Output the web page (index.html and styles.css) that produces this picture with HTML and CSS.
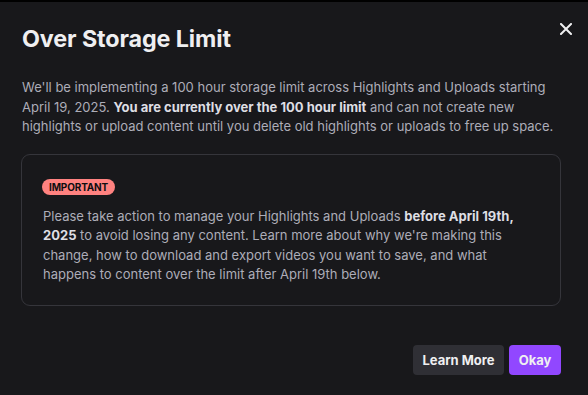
FILE: index.html
```html
<!DOCTYPE html>
<html>
<head>
<meta charset="utf-8">
<link rel="stylesheet" href="styles.css">
</head>
<body>
<div class="topbar"></div>
<div class="modal">
  <header class="head">
    <h1 class="title">Over Storage Limit</h1>
    <button class="close" aria-label="Close">
      <svg width="12" height="12" viewBox="0 0 12 12"><path d="M1 1 L11 11 M11 1 L1 11" stroke="#efeff1" stroke-width="2" stroke-linecap="square"/></svg>
    </button>
  </header>
  <p class="intro">We'll be implementing a 100 hour storage limit across Highlights and Uploads starting April 19, 2025. <strong>You are currently over the 100 hour limit</strong> and can not create new highlights or upload content until you delete old highlights or uploads to free up space.</p>
  <div class="notice">
    <span class="badge">IMPORTANT</span>
    <p class="notice-text">Please take action to manage your Highlights and Uploads <strong>before April 19th, 2025</strong> to avoid losing any content. Learn more about why we're making this change, how to download and export videos you want to save, and what happens to content over the limit after April 19th below.</p>
  </div>
  <footer class="actions">
    <button class="btn btn-secondary">Learn More</button>
    <button class="btn btn-primary">Okay</button>
  </footer>
</div>
</body>
</html>
```
FILE: styles.css
```css
html, body {
  margin: 0;
  padding: 0;
  background: #18181b;
  height: 100%;
}
body {
  font-family: Inter, "Noto Sans", sans-serif;
  color: #adadb8;
  width: 588px;
  height: 395px;
  overflow: hidden;
}
.topbar {
  height: 2px;
  background: #000;
}
.modal {
  padding: 0 27px 0 21px;
  display: flex;
  flex-direction: column;
}
.head {
  display: flex;
  justify-content: space-between;
  align-items: flex-start;
  padding-top: 23px;
}
.title {
  margin: 0;
  font-size: 23.3px;
  font-weight: 700;
  color: #efeff1;
  line-height: 28px;
  letter-spacing: -0.1px;
  margin-left: 1px;
}
.close {
  background: none;
  border: 0;
  padding: 0;
  margin-top: -2px;
  margin-right: -11px;
  width: 12px;
  height: 12px;
  display: flex;
}
.intro {
  margin: 25px 0 0 1px;
  font-size: 13px;
  line-height: 19.5px;
}
strong {
  color: #dedee3;
  font-weight: 700;
}
.notice {
  margin-top: 17px;
  border: 1px solid #35353b;
  border-radius: 9px;
  padding: 23px 20px 20px 20px;
  display: flex;
  flex-direction: column;
  align-items: flex-start;
}
.badge {
  background: #ff8280;
  color: #0e0e10;
  font-size: 10px;
  font-weight: 700;
  line-height: 16px;
  padding: 0 7px 0 7px;
  border-radius: 8px;
  margin-top: 1px;
  letter-spacing: -0.15px;
}
.notice-text {
  margin: 12px 0 0 1px;
  font-size: 13px;
  line-height: 19.5px;
}
.actions {
  margin-top: 39px;
  display: flex;
  justify-content: flex-end;
  gap: 5px;
}
.btn {
  font-family: Inter, "Noto Sans", sans-serif;
  font-size: 13px;
  font-weight: 700;
  height: 30px;
  border: 0;
  border-radius: 4px;
  padding: 0;
  color: #efeff1;
  white-space: nowrap;
}
.btn-secondary {
  background: #2f2f35;
  width: 91px;
}
.btn-primary {
  background: #9147ff;
  width: 52px;
}
```
